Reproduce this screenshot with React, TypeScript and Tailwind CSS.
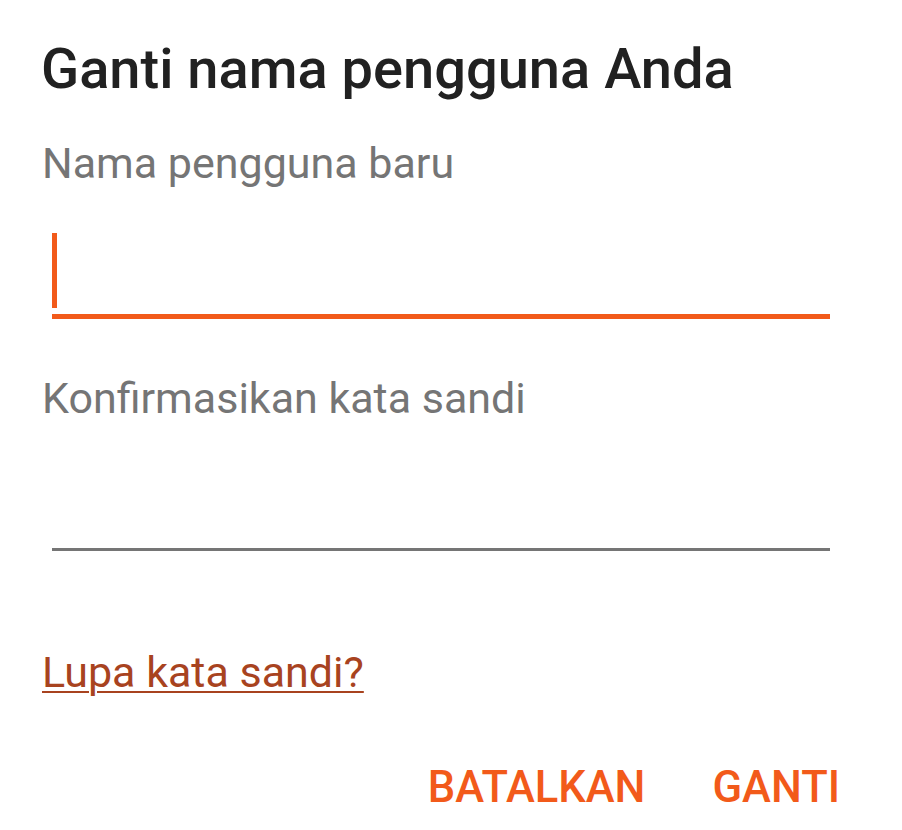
import React from "react";

export default function App() {
  return (
    <div
      className="w-[902px] h-[830px] bg-white overflow-hidden"
      style={{ fontFamily: "Roboto, 'Noto Sans', sans-serif" }}
    >
      <div className="flex flex-col pl-[42px] pr-[62px] pt-[41px]">
        <h1 className="text-[56px] leading-[56px] font-medium text-[#212121] -ml-[1px]">
          Ganti nama pengguna Anda
        </h1>
        <div className="mt-[45px] text-[43px] leading-[43px] text-[#757575]">
          Nama pengguna baru
        </div>
        <div className="ml-[10px] w-[778px] mt-[48px] flex flex-col">
          <div className="w-[5px] h-[75px] bg-[#f25a1a]" />
          <div className="mt-[6px] h-[5px] w-full bg-[#f25a1a]" />
        </div>
        <div className="mt-[58px] text-[43px] leading-[43px] text-[#757575]">
          Konfirmasikan kata sandi
        </div>
        <div className="ml-[10px] w-[778px] mt-[128px] h-[3px] bg-[#757575]" />
        <a
          href="#"
          className="mt-[100px] self-start text-[43px] leading-[43px] text-[#a8431f] underline decoration-2 underline-offset-[4px]"
        >
          Lupa kata sandi?
        </a>
        <div className="mt-[72px] flex justify-end gap-[67px]">
          <button className="text-[43.5px] leading-[43px] font-medium text-[#f25a1a]">
            BATALKAN
          </button>
          <button className="text-[43.5px] leading-[43px] font-medium text-[#f25a1a]">
            GANTI
          </button>
        </div>
      </div>
    </div>
  );
}
